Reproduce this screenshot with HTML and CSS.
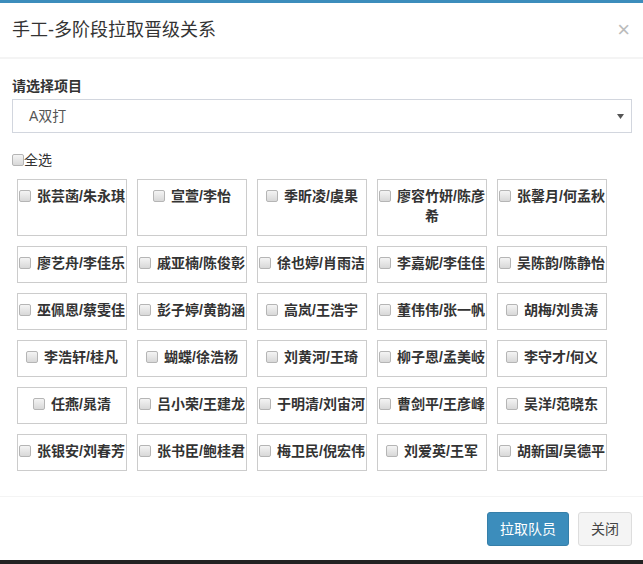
FILE: index.html
```html
<!DOCTYPE html>
<html lang="zh-CN">
<head>
<meta charset="utf-8">
<title>手工-多阶段拉取晋级关系</title>
<link rel="stylesheet" href="styles.css">
</head>
<body>
<div class="modal">
  <div class="modal-header">
    <h4 class="modal-title">手工-多阶段拉取晋级关系</h4>
    <span class="close">×</span>
  </div>
  <div class="modal-body">
    <div class="form-label">请选择项目</div>
    <div class="select">
      <span class="select-text">A双打</span>
      <svg class="select-arrow" width="7" height="5" viewBox="0 0 7 5"><path d="M0 0H7L3.5 5Z" fill="#555"/></svg>
    </div>
    <label class="check-all"><input type="checkbox" class="cb">全选</label>
    <div class="members">
      <label class="member"><input type="checkbox" class="cb">张芸菡/朱永琪</label>
      <label class="member"><input type="checkbox" class="cb">宣萱/李怡</label>
      <label class="member"><input type="checkbox" class="cb">季昕凌/虞果</label>
      <label class="member"><input type="checkbox" class="cb">廖容竹妍/陈彦希</label>
      <label class="member"><input type="checkbox" class="cb">张馨月/何孟秋</label>
      <label class="member"><input type="checkbox" class="cb">廖艺舟/李佳乐</label>
      <label class="member"><input type="checkbox" class="cb">戚亚楠/陈俊彰</label>
      <label class="member"><input type="checkbox" class="cb">徐也婷/肖雨洁</label>
      <label class="member"><input type="checkbox" class="cb">李嘉妮/李佳佳</label>
      <label class="member"><input type="checkbox" class="cb">吴陈韵/陈静怡</label>
      <label class="member"><input type="checkbox" class="cb">巫佩恩/蔡雯佳</label>
      <label class="member"><input type="checkbox" class="cb">彭子婷/黄韵涵</label>
      <label class="member"><input type="checkbox" class="cb">高岚/王浩宇</label>
      <label class="member"><input type="checkbox" class="cb">董伟伟/张一帆</label>
      <label class="member"><input type="checkbox" class="cb">胡梅/刘贵涛</label>
      <label class="member"><input type="checkbox" class="cb">李浩轩/桂凡</label>
      <label class="member"><input type="checkbox" class="cb">蝴蝶/徐浩杨</label>
      <label class="member"><input type="checkbox" class="cb">刘黄河/王琦</label>
      <label class="member"><input type="checkbox" class="cb">柳子恩/孟美岐</label>
      <label class="member"><input type="checkbox" class="cb">李守才/何义</label>
      <label class="member"><input type="checkbox" class="cb">任燕/晁清</label>
      <label class="member"><input type="checkbox" class="cb">吕小荣/王建龙</label>
      <label class="member"><input type="checkbox" class="cb">于明清/刘宙河</label>
      <label class="member"><input type="checkbox" class="cb">曹剑平/王彦峰</label>
      <label class="member"><input type="checkbox" class="cb">吴洋/范晓东</label>
      <label class="member"><input type="checkbox" class="cb">张银安/刘春芳</label>
      <label class="member"><input type="checkbox" class="cb">张书臣/鲍桂君</label>
      <label class="member"><input type="checkbox" class="cb">梅卫民/倪宏伟</label>
      <label class="member"><input type="checkbox" class="cb">刘爱英/王军</label>
      <label class="member"><input type="checkbox" class="cb">胡新国/吴德平</label>
    </div>
  </div>
  <div class="modal-footer">
    <button class="btn btn-primary">拉取队员</button>
    <button class="btn btn-default">关闭</button>
  </div>
</div>
</body>
</html>
```

FILE: styles.css
```css
html, body {
  margin: 0;
  padding: 0;
  background: #222;
}
body {
  font-family: "Liberation Sans", "Noto Sans CJK SC", sans-serif;
  font-size: 14px;
  color: #333;
}
.modal {
  background: #fff;
  border-top: 3px solid #3c8dbc;
}
.modal-header {
  display: flex;
  justify-content: space-between;
  align-items: center;
  padding: 14px 12px;
  border-bottom: 2px solid #f4f4f4;
}
.modal-title {
  margin: 0;
  font-size: 18px;
  font-weight: normal;
  line-height: 26px;
  color: #333;
}
.close {
  font-size: 22px;
  font-weight: normal;
  line-height: 1;
  color: #bbb;
  margin-right: 1px;
}
.modal-body {
  padding: 17px 11px 25px 12px;
}
.form-label {
  font-weight: bold;
  line-height: 20px;
  margin-bottom: 3px;
}
.select {
  display: flex;
  justify-content: space-between;
  align-items: center;
  height: 34px;
  box-sizing: border-box;
  border: 1px solid #d2d6de;
  padding: 0 7px 0 16px;
  color: #555;
}
.select-text {
  line-height: 20px;
}
.select-arrow {
  display: block;
}
.check-all {
  display: block;
  margin-top: 17px;
  line-height: 20px;
}
.cb {
  appearance: none;
  -webkit-appearance: none;
  width: 12px;
  height: 12px;
  margin: 0;
  box-sizing: border-box;
  border: 1px solid #b5b5b5;
  border-radius: 2px;
  background: linear-gradient(#f4f4f4, #d8d8d8);
  vertical-align: -1px;
}
.check-all .cb {
  margin-right: 0;
}
.members {
  display: flex;
  flex-wrap: wrap;
  gap: 10px;
  margin: 9px 0 0 5px;
}
.member {
  width: 110px;
  box-sizing: border-box;
  border: 1px solid #ccc;
  padding: 6px 0 9px;
  line-height: 20px;
  text-align: center;
  font-weight: bold;
  color: #333;
  overflow: hidden;
}
.member .cb {
  margin-right: 6px;
}
.modal-footer {
  display: flex;
  justify-content: flex-end;
  gap: 9px;
  padding: 15px 11px 14px;
  border-top: 1px solid #f4f4f4;
}
.btn {
  font-family: inherit;
  font-size: 14px;
  line-height: 20px;
  padding: 6px 12px;
  border-radius: 3px;
  border: 1px solid transparent;
  margin: 0;
}
.btn-primary {
  background: #3c8dbc;
  border-color: #367fa9;
  color: #fff;
}
.btn-default {
  background: #f4f4f4;
  border-color: #ddd;
  color: #444;
}
```
